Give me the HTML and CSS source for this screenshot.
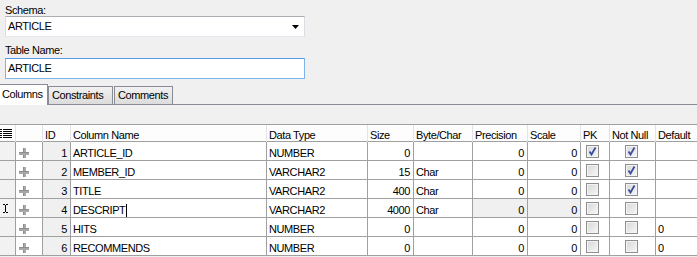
FILE: index.html
```html
<!DOCTYPE html>
<html lang="en">
<head>
    <meta charset="UTF-8">
    <title>Edit Table</title>
    <link rel="stylesheet" href="styles.css">
</head>
<body>
    <div class="editor">
        <label class="field-label">Schema:</label>
        <div class="combo">
            <span>ARTICLE</span>
            <svg class="combo-arrow" viewBox="0 0 7 4" width="7" height="4"><polygon points="0,0 7,0 3.5,4" fill="#000"/></svg>
        </div>
        <label class="field-label second">Table Name:</label>
        <div class="textbox">ARTICLE</div>
    </div>

    <div class="tabs">
        <div class="tab active">Columns</div>
        <div class="tab">Constraints</div>
        <div class="tab spaced">Comments</div>
    </div>

    <div class="tab-body">
        <div class="grid">
            <div class="grid-row grid-head">
                <div class="hcell">
                    <svg viewBox="0 0 12 9" width="12" height="9">
                        <g fill="#000">
                            <rect x="0" y="0" width="2" height="1"/><rect x="3" y="0" width="9" height="1"/>
                            <rect x="0" y="2" width="2" height="1"/><rect x="3" y="2" width="9" height="1"/>
                            <rect x="0" y="4" width="2" height="1"/><rect x="3" y="4" width="9" height="1"/>
                            <rect x="0" y="6" width="2" height="1"/><rect x="3" y="6" width="9" height="1"/>
                            <rect x="0" y="8" width="2" height="1"/><rect x="3" y="8" width="9" height="1"/>
                        </g>
                    </svg>
                </div>
                <div class="hcell"></div>
                <div class="hcell">ID</div>
                <div class="hcell">Column Name</div>
                <div class="hcell">Data Type</div>
                <div class="hcell">Size</div>
                <div class="hcell">Byte/Char</div>
                <div class="hcell">Precision</div>
                <div class="hcell">Scale</div>
                <div class="hcell">PK</div>
                <div class="hcell">Not Null</div>
                <div class="hcell last">Default</div>
            </div>

            <div class="grid-row">
                <div class="cell rowhead"></div>
                <div class="cell handle"><span class="plus"></span></div>
                <div class="cell num idcol">1</div>
                <div class="cell">ARTICLE_ID</div>
                <div class="cell">NUMBER</div>
                <div class="cell num">0</div>
                <div class="cell"></div>
                <div class="cell num">0</div>
                <div class="cell num">0</div>
                <div class="cell check pk"><span class="box"><svg viewBox="0 0 11 11"><path d="M2.5 5.5 L4.5 8.5 L8.5 1.5"/></svg></span></div>
                <div class="cell check nn"><span class="box"><svg viewBox="0 0 11 11"><path d="M2.5 5.5 L4.5 8.5 L8.5 1.5"/></svg></span></div>
                <div class="cell last"></div>
            </div>

            <div class="grid-row">
                <div class="cell rowhead"></div>
                <div class="cell handle"><span class="plus"></span></div>
                <div class="cell num idcol">2</div>
                <div class="cell">MEMBER_ID</div>
                <div class="cell">VARCHAR2</div>
                <div class="cell num">15</div>
                <div class="cell">Char</div>
                <div class="cell num">0</div>
                <div class="cell num">0</div>
                <div class="cell check pk"><span class="box"></span></div>
                <div class="cell check nn"><span class="box"><svg viewBox="0 0 11 11"><path d="M2.5 5.5 L4.5 8.5 L8.5 1.5"/></svg></span></div>
                <div class="cell last"></div>
            </div>

            <div class="grid-row">
                <div class="cell rowhead"></div>
                <div class="cell handle"><span class="plus"></span></div>
                <div class="cell num idcol">3</div>
                <div class="cell">TITLE</div>
                <div class="cell">VARCHAR2</div>
                <div class="cell num">400</div>
                <div class="cell">Char</div>
                <div class="cell num">0</div>
                <div class="cell num">0</div>
                <div class="cell check pk"><span class="box"></span></div>
                <div class="cell check nn"><span class="box"><svg viewBox="0 0 11 11"><path d="M2.5 5.5 L4.5 8.5 L8.5 1.5"/></svg></span></div>
                <div class="cell last"></div>
            </div>

            <div class="grid-row">
                <div class="cell rowhead">
                    <svg class="ibeam" viewBox="0 0 5 9" width="5" height="9">
                        <g fill="#000">
                            <rect x="0" y="0" width="2" height="1"/><rect x="3" y="0" width="2" height="1"/>
                            <rect x="2" y="1" width="1" height="7"/>
                            <rect x="0" y="8" width="2" height="1"/><rect x="3" y="8" width="2" height="1"/>
                        </g>
                    </svg>
                </div>
                <div class="cell handle"><span class="plus"></span></div>
                <div class="cell num idcol">4</div>
                <div class="cell">DESCRIPT<span class="caret"></span></div>
                <div class="cell">VARCHAR2</div>
                <div class="cell num">4000</div>
                <div class="cell">Char</div>
                <div class="cell num disabled">0</div>
                <div class="cell num disabled">0</div>
                <div class="cell check pk"><span class="box"></span></div>
                <div class="cell check nn"><span class="box"></span></div>
                <div class="cell last"></div>
            </div>

            <div class="grid-row">
                <div class="cell rowhead"></div>
                <div class="cell handle"><span class="plus"></span></div>
                <div class="cell num idcol">5</div>
                <div class="cell">HITS</div>
                <div class="cell">NUMBER</div>
                <div class="cell num">0</div>
                <div class="cell"></div>
                <div class="cell num">0</div>
                <div class="cell num">0</div>
                <div class="cell check pk"><span class="box"></span></div>
                <div class="cell check nn"><span class="box"></span></div>
                <div class="cell last">0</div>
            </div>

            <div class="grid-row">
                <div class="cell rowhead"></div>
                <div class="cell handle"><span class="plus"></span></div>
                <div class="cell num idcol">6</div>
                <div class="cell">RECOMMENDS</div>
                <div class="cell">NUMBER</div>
                <div class="cell num">0</div>
                <div class="cell"></div>
                <div class="cell num">0</div>
                <div class="cell num">0</div>
                <div class="cell check pk"><span class="box"></span></div>
                <div class="cell check nn"><span class="box"></span></div>
                <div class="cell last">0</div>
            </div>
        </div>
    </div>
</body>
</html>
```

FILE: styles.css
```css
* {
    margin: 0;
    padding: 0;
    box-sizing: border-box;
}

body {
    background: #f0f0f0;
    font-family: "Liberation Sans", Arial, sans-serif;
    font-size: 11px;
    letter-spacing: -0.4px;
    color: #000;
    overflow: hidden;
}

/* top form */
.editor {
    padding: 4px 0 0 5px;
}

.field-label {
    display: block;
    line-height: 12px;
}

.field-label.second {
    margin-top: 7px;
}

.combo,
.textbox {
    width: 300px;
    height: 21px;
    background: #fff;
    border: 1px solid;
    padding: 0 0 0 2px;
    line-height: 19px;
}

.combo {
    display: flex;
    align-items: center;
    justify-content: space-between;
    padding-right: 5px;
    border-color: #abadb3 #dcdde2 #e3e9ef #dcdde2;
}

.combo-arrow {
    display: block;
}

.textbox {
    margin-top: 2px;
    border-color: #569de5 #7eb4ea #7eb4ea #7eb4ea;
}

/* tab strip */
.tabs {
    display: flex;
    align-items: flex-end;
    height: 21px;
    margin-top: 5px;
    border-bottom: 1px solid #898c95;
}

.tab {
    height: 18px;
    padding-left: 3px;
    line-height: 16px;
    border: 1px solid #898c95;
    border-bottom: none;
    background: linear-gradient(#f2f2f2, #e6e6e6 50%, #dcdcdc);
    width: 65px;
}

.tab.spaced {
    margin-left: 1px;
    width: 59px;
}

.tab.active {
    position: relative;
    height: 21px;
    width: 49px;
    margin-left: -1px;
    margin-bottom: -1px;
    padding-left: 2px;
    line-height: 19px;
    background: #fff;
}

/* columns grid */
.tab-body {
    padding-top: 19px;
}

.grid {
    border-top: 1px solid #a0a0a0;
    background: #fff;
}

.grid-row {
    display: grid;
    grid-template-columns: 16px 27px 28px 196px 101px 46px 59px 55px 53px 29px 46px 1fr;
    height: 19px;
    border-bottom: 1px solid #a0a0a0;
}

.grid-head {
    height: 17px;
    background: #fdfdfd;
}

.hcell {
    padding: 3px 3px 0 2px;
    line-height: 14px;
    border-right: 1px solid #e3e3e3;
    white-space: nowrap;
}

.hcell svg {
    display: block;
    margin: 1px 0 0 -2px;
}

.cell {
    padding: 4px 3px 0 2px;
    line-height: 15px;
    border-right: 1px solid #a0a0a0;
    white-space: nowrap;
    overflow: hidden;
}

.last {
    border-right: none;
}

.num {
    text-align: right;
}

.rowhead {
    background: #f2f2f2;
}

.idcol,
.disabled {
    background: #f0f0f0;
}

.ibeam {
    display: block;
    margin: 1px 0 0 1px;
}

.handle {
    padding: 6px 0 0 3px;
}

.plus {
    display: block;
    position: relative;
    width: 10px;
    height: 10px;
}

.plus::before,
.plus::after {
    content: "";
    position: absolute;
    background: #a8a8a8;
    border-left: 1px solid #8e8e8e;
}

.plus::before {
    left: 4px;
    top: 0;
    width: 2px;
    height: 10px;
}

.plus::after {
    left: 0;
    top: 4px;
    width: 10px;
    height: 2px;
    border-left: none;
    border-top: 1px solid #8e8e8e;
}

.caret {
    display: inline-block;
    width: 1px;
    height: 13px;
    margin-left: 1px;
    background: #000;
    vertical-align: -3px;
}

.check {
    padding-top: 3px;
}

.check.pk {
    padding-left: 5px;
}

.check.nn {
    padding-left: 15px;
}

.box {
    display: block;
    width: 13px;
    height: 13px;
    border: 1px solid #8f8f8f;
    background: linear-gradient(135deg, #d6d6d6, #f8f8f8);
    box-shadow: inset 0 0 0 1px #f4f4f4;
}

.box svg {
    display: block;
    width: 11px;
    height: 11px;
}

.box path {
    fill: none;
    stroke: #3c4f9f;
    stroke-width: 1.8;
}
```
